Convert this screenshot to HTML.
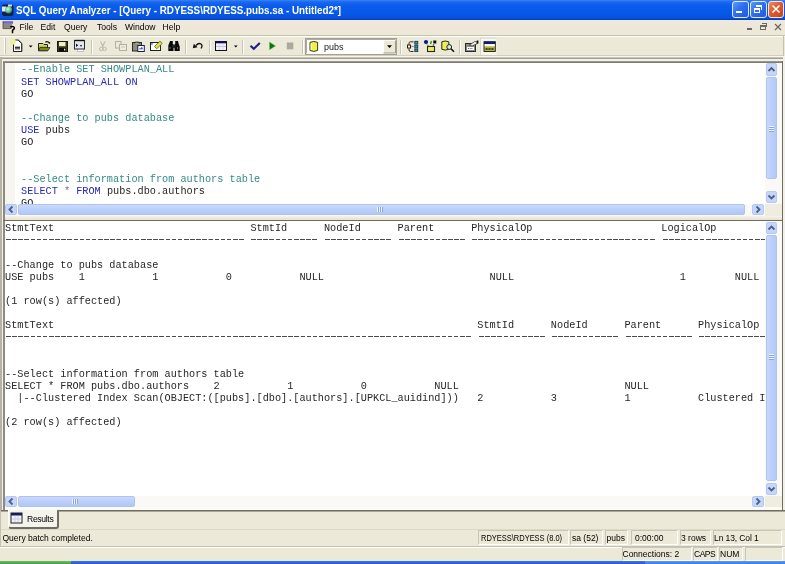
<!DOCTYPE html>
<html><head><meta charset="utf-8">
<style>
*{margin:0;padding:0;box-sizing:border-box}
html,body{width:785px;height:564px;overflow:hidden;background:#ECE9D8;font-family:"Liberation Sans",sans-serif}
#root{position:absolute;left:0;top:0;width:785px;height:564px;overflow:hidden;will-change:transform}
.a{position:absolute}
.t{position:absolute;white-space:pre;line-height:1}
.mono{font-family:"Liberation Mono",monospace;font-size:10.225px;line-height:12.14px;white-space:pre;position:absolute;color:#262626}
.menu{font-size:8.6px;color:#000;top:22.5px}
.sb{position:absolute;font-size:8.5px;color:#000;white-space:pre;line-height:1}
.pnl{position:absolute;border-top:1px solid #C9C6B8;border-left:1px solid #C9C6B8;border-bottom:1px solid #fff;border-right:1px solid #fff}
.btn{position:absolute;background:#C6D6FB;border:1px solid #B5C9F4;border-radius:2px}
.sep{position:absolute;top:40px;width:2px;height:14px;border-left:1px solid #C8C5B5;border-right:1px solid #fff}
.thv{position:absolute;background:linear-gradient(to right,#C9D8FC,#BBCFFA 50%,#B4C9F6);border:1px solid #AEC3F0;border-radius:2px}
.thh{position:absolute;background:linear-gradient(#CBDAFD,#BBCFFA 50%,#B2C7F5);border:1px solid #AEC3F0;border-radius:2px}
.gripv{position:absolute;width:5px;height:6px;background:repeating-linear-gradient(#EEF3FE 0,#EEF3FE 1px,#8CA5DC 1px,#8CA5DC 2px)}
.griph{position:absolute;width:6px;height:5px;background:repeating-linear-gradient(to right,#EEF3FE 0,#EEF3FE 1px,#8CA5DC 1px,#8CA5DC 2px)}
.dash{position:absolute;height:1px;background:repeating-linear-gradient(to right,transparent 0,transparent 1px,#4A4A4A 1.1px,#4A4A4A 5.6px,transparent 5.6px,transparent 6.135px)}
</style></head><body><div id="root">

<!-- Title bar -->
<div class="a" style="left:0;top:0;width:785px;height:20px;background:linear-gradient(#3C82F4 0%,#1A68F0 10%,#0A5CEC 30%,#0858E8 65%,#0652E0 88%,#0448D0 100%)"></div>
<div class="a" style="left:0;top:19px;width:785px;height:1px;background:#0A3FB8"></div>
<div class="t" style="left:16px;top:4.5px;font-size:11px;font-weight:bold;color:#fff;transform:scaleX(0.894);transform-origin:0 0">SQL Query Analyzer - [Query - RDYESS\RDYESS.pubs.sa - Untitled2*]</div>
<!-- app icon -->
<svg class="a" style="left:0;top:1px" width="16" height="18" viewBox="0 0 16 18">
<defs><radialGradient id="glb" cx="0.4" cy="0.4" r="0.7"><stop offset="0" stop-color="#C8F8E0"/><stop offset="0.5" stop-color="#6ACB9E"/><stop offset="1" stop-color="#1E6A48"/></radialGradient></defs>
<path d="M3 3.5h9l1.5 1.5v9l-1.5 1h-8.5l-1.5-1.5v-8.5z" fill="#14204A"/>
<rect x="2" y="5.5" width="4" height="5" fill="#E4E6F6"/>
<circle cx="8.6" cy="8.8" r="3.6" fill="url(#glb)"/>
<rect x="8" y="3.5" width="4" height="2" fill="#D8DCF0"/>
</svg>
<!-- title buttons -->
<div class="a" style="left:732px;top:1px;width:17px;height:17px;border:1px solid #E4ECFC;border-radius:3px;background:linear-gradient(135deg,#5A9AFA 0%,#2F6FF0 45%,#1E5AE0 100%)"></div>
<div class="a" style="left:736px;top:11px;width:6px;height:2px;background:#fff"></div>
<div class="a" style="left:750px;top:1px;width:17px;height:17px;border:1px solid #E4ECFC;border-radius:3px;background:linear-gradient(135deg,#5A9AFA 0%,#2F6FF0 45%,#1E5AE0 100%)"></div>
<div class="a" style="left:754px;top:8px;width:6px;height:5px;border:1px solid #fff;border-top-width:2px"></div>
<div class="a" style="left:756px;top:5px;width:6px;height:5px;border-top:2px solid #fff;border-right:1px solid #fff"></div>
<div class="a" style="left:768px;top:1px;width:16px;height:17px;border:1px solid #F0E6E0;border-radius:3px;background:linear-gradient(135deg,#F08860 0%,#E05A30 45%,#C8421C 100%)"></div>
<svg class="a" style="left:768px;top:1px" width="17" height="17" viewBox="0 0 17 17"><path d="M4.5 4.5L11.5 11.5M11.5 4.5L4.5 11.5" stroke="#fff" stroke-width="1.6"/></svg>

<!-- menu bar -->
<div class="a" style="left:0;top:20px;width:785px;height:15px;background:linear-gradient(#F3E8DA,#EFE7D9 40%,#ECE9D8)"></div>
<div class="a" style="left:0;top:20px;width:785px;height:1px;background:#E2EEF0"></div>
<!-- MDI child icon -->
<svg class="a" style="left:2px;top:20px" width="14" height="15" viewBox="0 0 14 15">
<rect x="1" y="1.2" width="10" height="2.6" fill="#7060C8"/>
<rect x="1" y="3.8" width="9" height="4.8" fill="#8C8B80"/>
<path d="M1 1.2v7.4h8" stroke="#4A4A44" stroke-width="0.8" fill="none"/>
<path d="M8.3 7.2q2-1.4 3.6-0.2q1.2 1.2-0.6 2.6l-0.8 0.8v2.8" stroke="#000" stroke-width="1.5" fill="none"/>
</svg>
<div class="t menu" style="left:19.5px">File</div>
<div class="t menu" style="left:40.5px">Edit</div>
<div class="t menu" style="left:64px">Query</div>
<div class="t menu" style="left:97px">Tools</div>
<div class="t menu" style="left:125px">Window</div>
<div class="t menu" style="left:162.5px">Help</div>
<!-- MDI buttons -->
<div class="a" style="left:747px;top:28px;width:5px;height:1.5px;background:#6A6A62"></div>
<div class="a" style="left:760px;top:25px;width:6px;height:5px;border:1px solid #6A6A62;border-top-width:2px"></div>
<div class="a" style="left:762px;top:23px;width:5px;height:4px;border-top:1px solid #6A6A62;border-right:1px solid #6A6A62"></div>
<svg class="a" style="left:774px;top:23px" width="8" height="8" viewBox="0 0 8 8"><path d="M1 1L7 7M7 1L1 7" stroke="#6A6A62" stroke-width="1.3"/></svg>
<div class="a" style="left:0;top:35px;width:785px;height:1px;background:#C5C1AE"></div>
<div class="a" style="left:0;top:36px;width:785px;height:1px;background:#FFFFFF"></div>

<!-- toolbar -->
<div class="a" style="left:0;top:55px;width:784px;height:1px;background:#D3CFBE"></div>
<div class="a" style="left:783px;top:36px;width:1px;height:20px;background:#C5C1AE"></div>
<div class="a" style="left:0;top:56px;width:785px;height:1px;background:#F8F7F2"></div>
<!-- grip -->
<div class="a" style="left:4px;top:38px;width:1px;height:16px;background:#fff"></div>
<div class="a" style="left:5px;top:38px;width:1px;height:16px;background:#C8C5B5"></div>

<svg class="a" style="left:0;top:0" width="785" height="60" viewBox="0 0 785 60">
<defs><radialGradient id="spk"><stop offset="0" stop-color="#F4FA90"/><stop offset="0.6" stop-color="#E2EE80" stop-opacity="0.8"/><stop offset="1" stop-color="#E8F0A0" stop-opacity="0"/></radialGradient>
<linearGradient id="fold" x1="0" y1="0" x2="0" y2="1"><stop offset="0" stop-color="#EEF27A"/><stop offset="1" stop-color="#6E7A10"/></linearGradient></defs>
<!-- new -->
<path d="M13.5 51.5v-7.5M13.5 51.5h8.2v-8.2l-3.5-3.3h-3" fill="#fff" stroke="#222" stroke-width="1"/>
<rect x="13.5" y="43" width="8" height="8.5" fill="#fff"/>
<path d="M13.5 44v7.5h8.2v-8l-3.6-3.5" fill="none" stroke="#222" stroke-width="1"/>
<rect x="15" y="46.5" width="5" height="3" fill="#6A6A6A"/>
<path d="M15 47.5h5" stroke="#222" stroke-width="0.8"/>
<circle cx="13" cy="41.8" r="3.6" fill="url(#spk)"/>
<path d="M28.8 45.5h3.8l-1.9 1.9z" fill="#000"/>
<!-- open -->
<path d="M38.5 43.5h4.5l1 1h3.5v6.2h-9z" fill="url(#fold)" stroke="#222" stroke-width="1"/>
<path d="M40 47.5h10l-2 3.2h-9.5z" fill="#7D8A18" stroke="#222" stroke-width="0.7"/>
<path d="M45.3 42.2q2.2-1.5 4.2 0.8" stroke="#111" stroke-width="1.3" fill="none"/>
<path d="M48.5 43.8l1.8-0.3l-0.3-1.8z" fill="#111"/>
<!-- save -->
<rect x="57.5" y="41.5" width="10" height="10" fill="#3A3A18" stroke="#1A1A08"/>
<rect x="59" y="42" width="6.5" height="4.2" fill="#F0F0C6"/>
<rect x="59" y="48" width="7" height="3" fill="#0A0A0A"/>
<rect x="64" y="48.7" width="1.3" height="1.8" fill="#E8E8E8"/>
<!-- window icon -->
<rect x="77.5" y="47.5" width="6" height="4" fill="#FAFAF6" stroke="#BDBAAE" stroke-width="0.8"/>
<rect x="74.5" y="40.5" width="10" height="8.5" fill="#E6E6EE" stroke="#2A2A30"/>
<path d="M74.5 40.5h10" stroke="#111" stroke-width="1.4"/>
<path d="M76 43.5l2.3 1.8-2.3 1.8z" fill="#101040"/>
<rect x="80" y="45" width="2" height="1.3" fill="#444"/>
<!-- cut disabled -->
<path d="M100.5 41.5l3 6M105 41.5l-3 6" stroke="#BDBAAD" stroke-width="1.1"/>
<circle cx="101.2" cy="49" r="1.7" fill="none" stroke="#BDBAAD"/>
<circle cx="104.6" cy="49" r="1.7" fill="none" stroke="#BDBAAD"/>
<!-- copy disabled -->
<rect x="115.5" y="41.5" width="5.5" height="6.5" fill="none" stroke="#B3B0A2"/>
<rect x="119.5" y="44.5" width="7" height="6" fill="#EDEBDF" stroke="#B3B0A2"/>
<path d="M121 47h4" stroke="#C8C5B8"/>
<!-- paste -->
<rect x="132.5" y="42.5" width="9" height="8.5" fill="#8E8E76" stroke="#2A2A20"/>
<path d="M134.8 43.5v-1.3h4.4v1.3" fill="#DAD8C8" stroke="#222"/>
<rect x="137.8" y="45.5" width="6.5" height="6" fill="#fff" stroke="#1A1A60"/>
<path d="M139.3 48.8h3.5M141.8 47v2" stroke="#3030B0" stroke-width="0.9"/>
<!-- insert -->
<rect x="150.5" y="42.5" width="10" height="8" fill="#fff" stroke="#222"/>
<rect x="151.2" y="43.2" width="1.5" height="1.5" fill="#3050B0"/>
<path d="M154.5 46.5l5.5-5.3 2.3 2.2-5.5 5.3z" fill="#E2E832" stroke="#444" stroke-width="0.7"/>
<!-- binoculars -->
<path d="M170 41h2.8v3h0.7v7h-5.2v-5.5z" fill="#0A0A0A"/>
<path d="M175.2 41h2.8l0.7 3 1 2.5v4.5h-5.2v-7h0.7z" fill="#0A0A0A"/>
<rect x="172.5" y="45" width="3" height="3" fill="#222"/>
<rect x="169.5" y="47.5" width="1" height="1" fill="#ccc"/>
<rect x="177" y="47.5" width="1" height="1" fill="#ccc"/>
<!-- undo -->
<path d="M196 45.5q2.5-3 5-1.5q2 1.5 0 4.5" stroke="#111" stroke-width="1.3" fill="none"/>
<path d="M192.8 48.3l1-4.6 3.8 3.6z" fill="#111"/>
<!-- grid -->
<rect x="215.5" y="41.5" width="11" height="9" fill="#F2F0FA" stroke="#111"/>
<rect x="215.5" y="41" width="11" height="2.3" fill="#0E1250"/>
<path d="M216 46.5h10" stroke="#C0BEDA" stroke-width="1"/>
<path d="M219.5 44v6M223 44v6" stroke="#D6D4E8" stroke-width="0.8"/>
<path d="M234 45.6h3.6l-1.8 1.9z" fill="#000"/>
<!-- check -->
<path d="M250.5 45.8l3.3 3 6-5.8" stroke="#1E1E88" stroke-width="2.1" fill="none"/>
<!-- play -->
<path d="M269.5 42v7.8l6-3.9z" fill="#127012" stroke="#5AC85A" stroke-width="0.5"/>
<!-- stop -->
<rect x="286.8" y="42.5" width="6.5" height="6.8" fill="#ACA89C"/>
<!-- combo -->
<rect x="305.5" y="38.5" width="91" height="16" fill="#fff" stroke="#A5A18D"/>
<path d="M306.5 53.5v-14h89" stroke="#716F64" stroke-width="1" fill="none" stroke-opacity="0.6"/>
<rect x="383.5" y="40.5" width="12" height="12.5" fill="#ECE9D8"/>
<path d="M383.5 53v-12.5h12" stroke="#fff" fill="none"/>
<path d="M395.5 40.5v12.5h-12" stroke="#9E9B8A" fill="none"/>
<path d="M387 45.3h5l-2.5 2.8z" fill="#000"/>
<path d="M310 42.3q3.8-1.6 7.6 0v8.2q-3.8 1.8-7.6 0z" fill="#F0F050" stroke="#3A3A10" stroke-width="1"/>
<path d="M311.3 43.5v6.5" stroke="#FAFAB8" stroke-width="1.3"/>
<!-- plan -->
<path d="M413.5 41.8h-3q-1.5 0-1.5 1.5v1.5M409 48.5v1.5q0 1.5 1.5 1.5h3" stroke="#3A2A1A" stroke-width="1" fill="none"/>
<rect x="407.5" y="45" width="3" height="3" fill="#fff" stroke="#2A1A10"/>
<path d="M411.5 46.5h2" stroke="#777" stroke-width="1"/>
<rect x="414.8" y="41.3" width="3" height="2.8" fill="#3C8EA8" stroke="#12304A" stroke-width="0.8"/>
<rect x="414.8" y="45.2" width="3" height="2.8" fill="#3C8EA8" stroke="#12304A" stroke-width="0.8"/>
<rect x="414.8" y="49" width="3" height="2.6" fill="#3C8EA8" stroke="#12304A" stroke-width="0.8"/>
<!-- objects -->
<circle cx="426" cy="42" r="2.1" fill="#10167A"/>
<path d="M430.5 44l1-3" stroke="#2E9A2E" stroke-width="1.5"/>
<rect x="433.3" y="40.5" width="3" height="3" fill="#0A0A0A"/>
<path d="M427 44.5l1.5 1.5M434 44l-1 2" stroke="#444" stroke-width="0.9"/>
<rect x="427.5" y="46.5" width="7" height="5" fill="#EAEA6A" stroke="#2A2A10" stroke-width="1.1"/>
<!-- search -->
<path d="M441.8 41.8q3.5-1.6 7 0v7.5q-3.5 1.6-7 0z" fill="#EEEE60" stroke="#2A2A10" stroke-width="1"/>
<circle cx="449.2" cy="47" r="2.4" fill="#D8F0D8" stroke="#222" stroke-width="1"/>
<path d="M451 48.8l3 3" stroke="#111" stroke-width="1.6"/>
<!-- properties -->
<rect x="465.5" y="43.5" width="10" height="8" fill="#8C8A80" stroke="#2A2A28"/>
<rect x="467" y="47" width="7" height="3" fill="#fff"/>
<path d="M468 48.5h5" stroke="#444" stroke-width="0.8" stroke-dasharray="1 0.7"/>
<path d="M469.5 45l5-3.3h2.5v2l-5 2.3z" fill="#F4F4F4" stroke="#333" stroke-width="0.8"/>
<rect x="476.8" y="40.5" width="1.6" height="3.2" fill="#111"/>
<!-- pressed results button -->
<rect x="480.5" y="38" width="16" height="17" fill="#F6F5F0"/>
<path d="M480.5 55v-17h16" stroke="#D9D6C8" fill="none"/>
<rect x="484" y="41.7" width="11.3" height="9.8" fill="#B6B646" stroke="#1A1A10" stroke-width="0.9"/>
<rect x="484" y="41.7" width="11.3" height="2.4" fill="#101C70"/>
<rect x="484.6" y="44.1" width="10.2" height="2.2" fill="#fff"/>
<path d="M485.5 49h8.5" stroke="#2A2A10" stroke-width="1.4" stroke-dasharray="2.2 0.7"/>
</svg>
<div class="sep" style="left:91px"></div>
<div class="sep" style="left:185px"></div>
<div class="sep" style="left:209px"></div>
<div class="sep" style="left:242px"></div>
<div class="sep" style="left:302px"></div>
<div class="sep" style="left:400px"></div>
<div class="sep" style="left:459px"></div>
<div class="t" style="left:324px;top:42.5px;font-size:9px;color:#1a1a1a">pubs</div>

<!-- Editor pane frame -->
<div class="a" style="left:0;top:57px;width:785px;height:507px;background:#ECE9D8"></div>
<div class="a" style="left:0;top:57px;width:785px;height:1px;background:#C6C3B4"></div>
<div class="a" style="left:0;top:58px;width:785px;height:1px;background:#A3A092"></div>
<div class="a" style="left:0;top:59px;width:785px;height:2px;background:#F1F0E9"></div>
<div class="a" style="left:0;top:57px;width:2px;height:455px;background:#B6B3A4"></div>
<div class="a" style="left:2px;top:59px;width:1px;height:453px;background:#F1F0E9"></div>
<div class="a" style="left:3px;top:61px;width:2px;height:450px;background:#8E8B7E"></div>
<div class="a" style="left:3px;top:61px;width:780px;height:1px;background:#9A978A"></div>
<div class="a" style="left:3px;top:62px;width:780px;height:1px;background:#7F7C70"></div>
<div class="a" style="left:782px;top:61px;width:1px;height:450px;background:#6F6D62"></div>
<div class="a" style="left:783px;top:57px;width:2px;height:455px;background:#F1F0E9"></div>

<div class="a" style="left:5px;top:63px;width:777px;height:141px;background:#fff;overflow:hidden">
<div class="a" style="left:0;top:0;width:10px;height:141px;background:#F6F5F0"></div>
<pre class="mono" style="left:16px;top:0.4px"><span style="color:#338A84">--Enable SET SHOWPLAN_ALL</span>
<span style="color:#2828B8">SET SHOWPLAN_ALL ON</span>
GO

<span style="color:#338A84">--Change to pubs database</span>
<span style="color:#2828B8">USE</span> pubs
GO


<span style="color:#338A84">--Select information from authors table</span>
<span style="color:#2828B8">SELECT</span> <span style="color:#777">*</span> <span style="color:#2828B8">FROM</span> pubs.dbo.authors
GO</pre>
</div>

<!-- editor v scrollbar -->
<div class="a" style="left:765px;top:63px;width:17px;height:141px;background:#FAF9F5"></div>
<div class="btn" style="left:766px;top:63px;width:11px;height:13px"></div>
<svg class="a" style="left:766px;top:63px" width="11" height="13"><path d="M2.5 8L5.5 5L8.5 8" stroke="#4D6185" stroke-width="1.8" fill="none"/></svg>
<div class="thv" style="left:766px;top:77px;width:11px;height:102px"></div>
<div class="gripv" style="left:769px;top:126px"></div>
<div class="btn" style="left:766px;top:191px;width:11px;height:12px"></div>
<svg class="a" style="left:766px;top:191px" width="11" height="12"><path d="M2.5 4.5L5.5 7.5L8.5 4.5" stroke="#4D6185" stroke-width="1.8" fill="none"/></svg>
<!-- editor h scrollbar -->
<div class="a" style="left:5px;top:204px;width:760px;height:12px;background:#FAF9F5"></div>
<div class="btn" style="left:5px;top:204px;width:12px;height:11px"></div>
<svg class="a" style="left:5px;top:204px" width="12" height="11"><path d="M7.5 2.5L4.5 5.5L7.5 8.5" stroke="#4D6185" stroke-width="1.8" fill="none"/></svg>
<div class="thh" style="left:18px;top:204px;width:727px;height:11px"></div>
<div class="griph" style="left:377px;top:207px"></div>
<div class="btn" style="left:752px;top:204px;width:12px;height:11px"></div>
<svg class="a" style="left:752px;top:204px" width="12" height="11"><path d="M4.5 2.5L7.5 5.5L4.5 8.5" stroke="#4D6185" stroke-width="1.8" fill="none"/></svg>
<div class="a" style="left:765px;top:204px;width:17px;height:12px;background:#EFEDE0"></div>
<!-- splitter -->
<div class="a" style="left:5px;top:216px;width:777px;height:4px;background:linear-gradient(#F6F4EA,#E6E2D0)"></div>
<div class="a" style="left:3px;top:220px;width:780px;height:1px;background:#6F6D62"></div>

<!-- Results pane -->
<div class="a" style="left:5px;top:221px;width:777px;height:286px;background:#fff;overflow:hidden">
<pre class="mono" style="left:0.1px;top:1.2px">StmtText                                StmtId      NodeId      Parent      PhysicalOp                     LogicalOp


--Change to pubs database
USE pubs    1           1           0           NULL                           NULL                           1        NULL

(1 row(s) affected)

StmtText                                                                     StmtId      NodeId      Parent      PhysicalOp



--Select information from authors table
SELECT * FROM pubs.dbo.authors    2           1           0           NULL                           NULL
  |--Clustered Index Scan(OBJECT:([pubs].[dbo].[authors].[UPKCL_auidind]))   2           3           1           Clustered Index Scan

(2 row(s) affected)</pre>
</div>
<!-- dashes row 1 -->
<div class="dash" style="left:5.1px;top:239px;width:239.3px"></div>
<div class="dash" style="left:250.4px;top:239px;width:67.5px"></div>
<div class="dash" style="left:324px;top:239px;width:67.5px"></div>
<div class="dash" style="left:397.7px;top:239px;width:67.5px"></div>
<div class="dash" style="left:471.3px;top:239px;width:184px"></div>
<div class="dash" style="left:661.5px;top:239px;width:104px"></div>
<!-- dashes row 2 -->
<div class="dash" style="left:5.1px;top:336px;width:466.3px"></div>
<div class="dash" style="left:477.5px;top:336px;width:67.5px"></div>
<div class="dash" style="left:551.1px;top:336px;width:67.5px"></div>
<div class="dash" style="left:624.7px;top:336px;width:67.5px"></div>
<div class="dash" style="left:698.4px;top:336px;width:67px"></div>

<!-- results v scrollbar -->
<div class="a" style="left:765px;top:221px;width:17px;height:275px;background:#FAF9F5"></div>
<div class="btn" style="left:766px;top:222px;width:11px;height:12px"></div>
<svg class="a" style="left:766px;top:222px" width="11" height="12"><path d="M2.5 7.5L5.5 4.5L8.5 7.5" stroke="#4D6185" stroke-width="1.8" fill="none"/></svg>
<div class="thv" style="left:766px;top:235px;width:11px;height:246px"></div>
<div class="gripv" style="left:769px;top:354px"></div>
<div class="btn" style="left:766px;top:483px;width:11px;height:12px"></div>
<svg class="a" style="left:766px;top:483px" width="11" height="12"><path d="M2.5 4.5L5.5 7.5L8.5 4.5" stroke="#4D6185" stroke-width="1.8" fill="none"/></svg>
<!-- results h scrollbar -->
<div class="a" style="left:5px;top:496px;width:760px;height:12px;background:#FAF9F5"></div>
<div class="btn" style="left:5px;top:496px;width:12px;height:11px"></div>
<svg class="a" style="left:5px;top:496px" width="12" height="11"><path d="M7.5 2.5L4.5 5.5L7.5 8.5" stroke="#4D6185" stroke-width="1.8" fill="none"/></svg>
<div class="thh" style="left:18px;top:496px;width:117px;height:11px"></div>
<div class="griph" style="left:146px;top:499px;display:none"></div>
<div class="griph" style="left:72px;top:499px"></div>
<div class="btn" style="left:752px;top:496px;width:12px;height:11px"></div>
<svg class="a" style="left:752px;top:496px" width="12" height="11"><path d="M4.5 2.5L7.5 5.5L4.5 8.5" stroke="#4D6185" stroke-width="1.8" fill="none"/></svg>
<div class="a" style="left:765px;top:496px;width:17px;height:12px;background:#EFEDE0"></div>
<div class="a" style="left:5px;top:507px;width:777px;height:3px;background:#FBFBF8"></div>
<div class="a" style="left:0;top:510px;width:785px;height:1px;background:#6F6D62"></div>
<div class="a" style="left:0;top:511px;width:785px;height:1px;background:#A9A696"></div>

<!-- tab -->
<div class="a" style="left:8px;top:510px;width:51px;height:19px;background:#F4F3EC;border-left:1px solid #fff;border-right:2px solid #6F6D62;border-bottom:2px solid #6F6D62;border-radius:0 0 3px 3px"></div>
<svg class="a" style="left:10px;top:512px" width="13" height="12" viewBox="0 0 13 12">
<rect x="1" y="1" width="11" height="10" fill="#F2F0FA" stroke="#222" stroke-width="1"/>
<rect x="1" y="1" width="11" height="2.5" fill="#141E5A"/>
<path d="M2 7h9M5 4v6M8 4v6" stroke="#C8C6DC" stroke-width="0.8"/>
</svg>
<div class="t" style="left:27px;top:514.5px;font-size:8.6px;letter-spacing:-0.32px">Results</div>

<!-- status bar 1 -->
<div class="a" style="left:0;top:529px;width:785px;height:1px;background:#DDD9C8"></div>
<div class="a" style="left:0;top:510px;width:1px;height:36px;background:#C5C1AE"></div>
<div class="sb" style="left:2.5px;top:534px">Query batch completed.</div>
<div class="pnl" style="left:478px;top:530px;width:91px;height:15px"></div>
<div class="pnl" style="left:570px;top:530px;width:33px;height:15px"></div>
<div class="pnl" style="left:605px;top:530px;width:23px;height:15px"></div>
<div class="pnl" style="left:631px;top:530px;width:47px;height:15px"></div>
<div class="pnl" style="left:680px;top:530px;width:31px;height:15px"></div>
<div class="pnl" style="left:713px;top:530px;width:69px;height:15px"></div>
<div class="sb" style="left:480.5px;top:534px;transform:scaleX(0.88);transform-origin:0 0">RDYESS\RDYESS (8.0)</div>
<div class="sb" style="left:572px;top:534px">sa (52)</div>
<div class="sb" style="left:606.5px;top:534px">pubs</div>
<div class="sb" style="left:635px;top:534px">0:00:00</div>
<div class="sb" style="left:681px;top:534px">3 rows</div>
<div class="sb" style="left:714px;top:534px;letter-spacing:-0.1px">Ln 13, Col 1</div>

<!-- status bar 2 -->
<div class="a" style="left:0;top:546px;width:785px;height:1px;background:#C5C1AE"></div>
<div class="a" style="left:0;top:547px;width:785px;height:1px;background:#fff"></div>
<div class="pnl" style="left:622px;top:547px;width:70px;height:14px"></div>
<div class="pnl" style="left:693px;top:547px;width:25px;height:14px"></div>
<div class="pnl" style="left:719px;top:547px;width:24px;height:14px"></div>
<div class="pnl" style="left:745px;top:547px;width:38px;height:14px"></div>
<div class="sb" style="left:622.5px;top:550px">Connections: 2</div>
<div class="sb" style="left:694px;top:550px;letter-spacing:-0.5px">CAPS</div>
<div class="sb" style="left:720px;top:550px">NUM</div>

<!-- taskbar -->
<div class="a" style="left:0;top:561px;width:785px;height:3px;background:linear-gradient(#3C78E0,#2458D0)"></div>
<div class="a" style="left:645px;top:561px;width:140px;height:3px;background:linear-gradient(#5A9AF5,#3A7AEA)"></div>
<div class="a" style="left:0;top:561px;width:71px;height:3px;background:linear-gradient(#6CC06C,#3E9E3E)"></div>

</div></body></html>
